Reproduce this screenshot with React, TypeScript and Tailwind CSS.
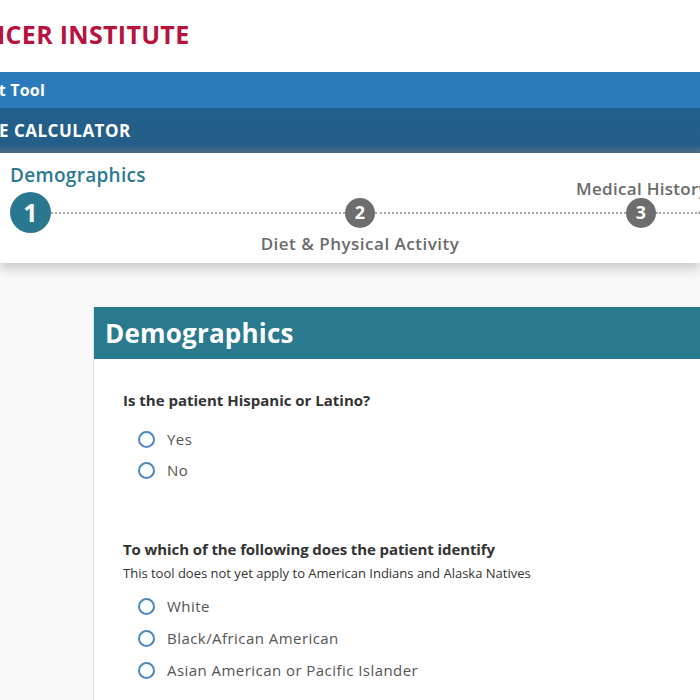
import React from 'react';

const heading = { fontFamily: '"Open Sans", "Noto Sans", sans-serif' };

const raceOptions = ['White', 'Black/African American', 'Asian American or Pacific Islander'];

function Radio({ label, tall }: { label: string; tall?: boolean }) {
  return (
    <label className={`flex items-center pl-[15px] ${tall ? 'h-[32px]' : 'h-[31px]'}`}>
      <span className="h-[17px] w-[17px] rounded-full border-2 border-[#4d87c2] bg-white" />
      <span className="ml-[12px] text-[15px] font-medium tracking-[0.45px] text-[#555]">{label}</span>
    </label>
  );
}

export default function App() {
  return (
    <div className="h-[700px] w-[700px] overflow-hidden bg-[#f8f8f8]" style={heading}>
      {/* Site header */}
      <div className="flex h-[72px] items-center bg-white pb-[2px]">
        <span className="ml-[-15px] text-[25px] font-bold tracking-[0.3px] text-[#b8123e]">NCER INSTITUTE</span>
      </div>

      <div className="flex h-[36px] items-center bg-[#2b7bbb]">
        <span className="ml-[-12px] text-[16px] font-bold tracking-[0.2px] text-white">nt Tool</span>
      </div>

      <div className="flex h-[45px] items-center bg-[linear-gradient(to_bottom,#235f8c_0%,#245e88_82%,#50708a_100%)]">
        <span className="ml-[-1px] text-[17px] font-bold tracking-[0.5px] text-white">E CALCULATOR</span>
      </div>

      {/* Stepper */}
      <div className="relative z-10 h-[110px] bg-white shadow-[0_6px_10px_rgba(0,0,0,0.18)]">
        <div className="flex h-[32px] items-end pl-[10px]">
          <span className="w-[566px] shrink-0 text-[19px] font-semibold leading-none tracking-[0.3px] text-[#2a7a90]">Demographics</span>
          <span className="mb-[-12px] whitespace-nowrap text-[17px] font-semibold leading-none tracking-[0.3px] text-[#6b6b6b]">Medical History</span>
        </div>
        <div className="mt-[7px] flex items-center pl-[10px]">
          <span className="flex h-[41px] w-[41px] items-center justify-center rounded-full bg-[#29788f] text-[25px] font-bold text-white">1</span>
          <span className="h-0 w-[294px] border-t-2 border-dotted border-[#a8a8a8]" />
          <span className="flex h-[30px] w-[30px] items-center justify-center rounded-full bg-[#6d6d6d] text-[18px] font-bold text-white">2</span>
          <span className="h-0 w-[251px] border-t-2 border-dotted border-[#a8a8a8]" />
          <span className="flex h-[30px] w-[30px] items-center justify-center rounded-full bg-[#6d6d6d] text-[18px] font-bold text-white">3</span>
          <span className="h-0 flex-1 border-t-2 border-dotted border-[#a8a8a8]" />
        </div>
        <div className="mt-[-2px] flex justify-center pl-[20px]">
          <span className="text-[17px] font-semibold tracking-[0.5px] text-[#6b6b6b]">Diet &amp; Physical Activity</span>
        </div>
      </div>

      {/* Form card */}
      <div className="ml-[93px] mt-[44px] border-l border-[#e3e3e3] bg-white">
        <div className="flex h-[52px] items-center bg-[#29798f] pl-[11px]">
          <h1 className="text-[26px] font-bold tracking-[0.2px] text-white">Demographics</h1>
        </div>

        <div className="pl-[29px] pt-[30px]">
          <p className="text-[15px] font-bold text-[#333]">Is the patient Hispanic or Latino?</p>
          <div className="mt-[12px]">
            <Radio label="Yes" />
            <Radio label="No" />
          </div>

          <p className="mt-[52px] text-[15px] font-bold tracking-[-0.1px] text-[#333]">To which of the following does the patient identify</p>
          <p className="mt-[4px] text-[13px] text-[#333]">This tool does not yet apply to American Indians and Alaska Natives</p>
          <div className="mt-[7px]">
            {raceOptions.map((o) => (
              <Radio key={o} label={o} tall />
            ))}
          </div>
          <div className="h-[40px]" />
        </div>
      </div>
    </div>
  );
}
